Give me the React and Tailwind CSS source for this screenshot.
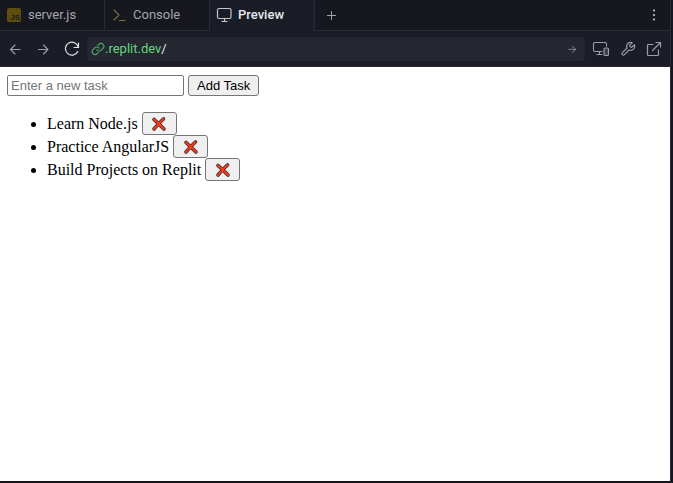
import { useState } from 'react';

const stroke = {
  fill: 'none',
  stroke: 'currentColor',
  strokeLinecap: 'round',
  strokeLinejoin: 'round',
};

function JsIcon() {
  return (
    <span className="flex size-4 items-center justify-center">
      <span className="flex size-3.5 items-end justify-end rounded-xs bg-[#5e4d0d] pr-px font-['Liberation_Sans',sans-serif] text-[8px] leading-[9px] font-bold text-[#1b1a1c]">
        JS
      </span>
    </span>
  );
}

function PromptIcon() {
  return (
    <svg viewBox="0 0 16 16" className="size-4 text-[#7d6f3f]" {...stroke} strokeWidth="1.1">
      <path d="M3 3l5 5-5 5M8.500 13.500h5.500" />
    </svg>
  );
}

function MonitorIcon() {
  return (
    <svg viewBox="0 0 16 16" className="size-4 text-[#c3c6cc]" {...stroke} strokeWidth="1.2">
      <rect x="1.500" y="1.500" width="13.500" height="10" rx="1.500" />
      <path d="M8.500 11.500v3M6 14.500h5" />
    </svg>
  );
}

function BackIcon() {
  return (
    <svg viewBox="0 0 14 14" className="size-3.5" {...stroke} strokeWidth="1.1">
      <path d="M12 7.500H2.500M7 3 2.500 7.500 7 12" />
    </svg>
  );
}

function ForwardIcon({ className }) {
  return (
    <svg viewBox="0 0 14 14" className={className} {...stroke} strokeWidth="1.1">
      <path d="M2.500 7.500H12M7.500 3 12 7.500 7.500 12" />
    </svg>
  );
}

function ReloadIcon() {
  return (
    <svg viewBox="0 0 16 16" className="size-4 text-[#dfe1e6]" {...stroke} strokeWidth="1.2">
      <path d="M14.500 2v4.500H10M14.300 6.300A6.500 6.500 0 1 0 13.800 10.500" />
    </svg>
  );
}

function LinkIcon() {
  return (
    <svg viewBox="0 0 24 24" className="size-3.5 shrink-0 text-[#4fae68]" {...stroke} strokeWidth="1.900">
      <path d="M10 13.500a5 5 0 0 0 7.540.54l3-3a5 5 0 0 0-7.070-7.070l-1.720 1.710" />
      <path d="M14 10.500a5 5 0 0 0-7.540-.54l-3 3a5 5 0 0 0 7.070 7.070l1.710-1.710" />
    </svg>
  );
}

function DevicesIcon() {
  return (
    <svg viewBox="0 0 18 16" className="h-4 w-[18px]" {...stroke} strokeWidth="1.1">
      <path d="M10 10.500H3A1.500 1.500 0 0 1 1.500 9V3A1.500 1.500 0 0 1 3 1.500h10A1.500 1.500 0 0 1 14.500 3v2M7.500 10.500v3M5 13.500h5" />
      <rect x="12" y="7" width="4.500" height="7.500" rx="1" fill="#3d404a" />
    </svg>
  );
}

function WrenchIcon() {
  return (
    <svg viewBox="0 0 24 24" className="size-4" {...stroke} strokeWidth="1.800">
      <path d="M14.700 6.300a1 1 0 0 0 0 1.400l1.600 1.600a1 1 0 0 0 1.400 0l3.770-3.770a6 6 0 0 1-7.940 7.940l-6.910 6.910a2.120 2.120 0 0 1-3-3l6.910-6.910a6 6 0 0 1 7.940-7.940z" />
    </svg>
  );
}

function ExternalIcon() {
  return (
    <svg viewBox="0 0 16 16" className="size-4" {...stroke} strokeWidth="1.200">
      <path d="M12.500 9v4.500a1 1 0 0 1-1 1h-9a1 1 0 0 1-1-1v-9a1 1 0 0 1 1-1H7M10 1.500h4.500V6M14.500 1.500 6.500 9.500" />
    </svg>
  );
}

function CrossIcon() {
  return (
    <svg viewBox="0 0 16 16" className="size-4" fill="none" strokeLinecap="round">
      <path d="M3 3.500c3 3 6.500 6 10 9.500M12.500 3c-3.500 3-6.500 6.500-9.500 10" stroke="#3a2a26" strokeWidth="3.600" />
      <path d="M3 3.500c3 3 6.500 6 10 9.500M12.500 3c-3.500 3-6.500 6.500-9.500 10" stroke="#ed3b1c" strokeWidth="2.200" />
    </svg>
  );
}

function Tab({ icon, label, active }) {
  return (
    <button
      type="button"
      role="tab"
      aria-selected={active}
      className={
        active
          ? 'flex w-[105px] items-center gap-1.5 border-r border-r-[#2a2b36] border-b border-b-[#1a1d26] bg-[#1a1d26] pl-1.5 font-medium text-[#e6e8ee]'
          : 'flex w-[105px] items-center gap-1.5 border-r border-b border-[#2a2b36] pl-1.5 text-[#a4a6ae]'
      }
    >
      {icon}
      {label}
    </button>
  );
}

const buttonStyle = 'rounded-[3px] border border-[#767676] bg-[#efefef]';

export default function App() {
  const [tasks, setTasks] = useState(['Learn Node.js', 'Practice AngularJS', 'Build Projects on Replit']);
  const [draft, setDraft] = useState('');

  function addTask(event) {
    event.preventDefault();
    if (draft.trim()) {
      setTasks([...tasks, draft.trim()]);
      setDraft('');
    }
  }

  return (
    <div className="flex h-screen flex-col bg-[#15161f] pr-0.5 pb-0.5">
      <div className="flex min-h-0 flex-1 flex-col border-r border-[#2a2b36] bg-[#1a1d26] font-['Roboto',sans-serif] text-[13px]">
        <div className="flex h-[31px] bg-[#171720]">
          <div role="tablist" className="flex">
            <Tab icon={<JsIcon />} label="server.js" active={false} />
            <Tab icon={<PromptIcon />} label="Console" active={false} />
            <Tab icon={<MonitorIcon />} label="Preview" active />
          </div>
          <div className="flex flex-1 items-center justify-between border-b border-[#2a2b36] pr-2 pl-2.5 text-[#a4a6ae]">
            <button type="button" aria-label="New tab">
              <svg viewBox="0 0 12 12" className="size-3" {...stroke} strokeWidth="1">
                <path d="M6.500 2.500v8M2.500 6.500h8" />
              </svg>
            </button>
            <button type="button" aria-label="More options">
              <svg viewBox="0 0 16 16" className="size-4" fill="#c3c6cc">
                <circle cx="8" cy="3.500" r="1.100" />
                <circle cx="8" cy="8" r="1.100" />
                <circle cx="8" cy="12.500" r="1.100" />
              </svg>
            </button>
          </div>
        </div>

        <div className="flex h-9 items-center border-b border-[#2a2433] px-2 text-[#9a9da6]">
          <div className="flex items-center gap-3.5">
            <button type="button" aria-label="Back"><BackIcon /></button>
            <button type="button" aria-label="Forward"><ForwardIcon className="size-3.5" /></button>
            <button type="button" aria-label="Reload"><ReloadIcon /></button>
          </div>
          <div className="mx-[7px] flex h-6 flex-1 items-center rounded bg-[#242730] pr-2 pl-1">
            <LinkIcon />
            <a href="/" className="flex-1 text-[#e6e8ee]">
              <span className="text-[#62d67e]">.replit.dev</span>/
            </a>
            <button type="button" aria-label="Go"><ForwardIcon className="size-2.5" /></button>
          </div>
          <div className="flex items-center gap-2.5">
            <button type="button" aria-label="Device size"><DevicesIcon /></button>
            <button type="button" aria-label="Developer tools"><WrenchIcon /></button>
            <button type="button" aria-label="Open in new tab"><ExternalIcon /></button>
          </div>
        </div>

        <main className="min-h-0 flex-1 overflow-auto bg-white px-[7px] pt-2 font-['Liberation_Serif',serif] text-base text-black">
          <form onSubmit={addTask} className="flex gap-1 font-['Liberation_Sans',sans-serif] text-[13px]">
            <input
              aria-label="New task"
              value={draft}
              onChange={(event) => setDraft(event.target.value)}
              placeholder="Enter a new task"
              className="h-[21px] w-[177px] rounded-xs border border-[#767676] px-[3px] placeholder:text-[#757575]"
            />
            <button type="submit" className={`h-[21px] px-2 ${buttonStyle}`}>Add Task</button>
          </form>
          <ul className="mt-4 list-disc pl-10">
            {tasks.map((task) => (
              <li key={task} className="h-[23px] leading-[23px]">
                {task}{' '}
                <button
                  type="button"
                  aria-label={`Delete ${task}`}
                  onClick={() => setTasks(tasks.filter((other) => other !== task))}
                  className={`inline-flex h-[23px] w-[35px] items-center justify-center align-top ${buttonStyle}`}
                >
                  <CrossIcon />
                </button>
              </li>
            ))}
          </ul>
        </main>
      </div>
    </div>
  );
}
